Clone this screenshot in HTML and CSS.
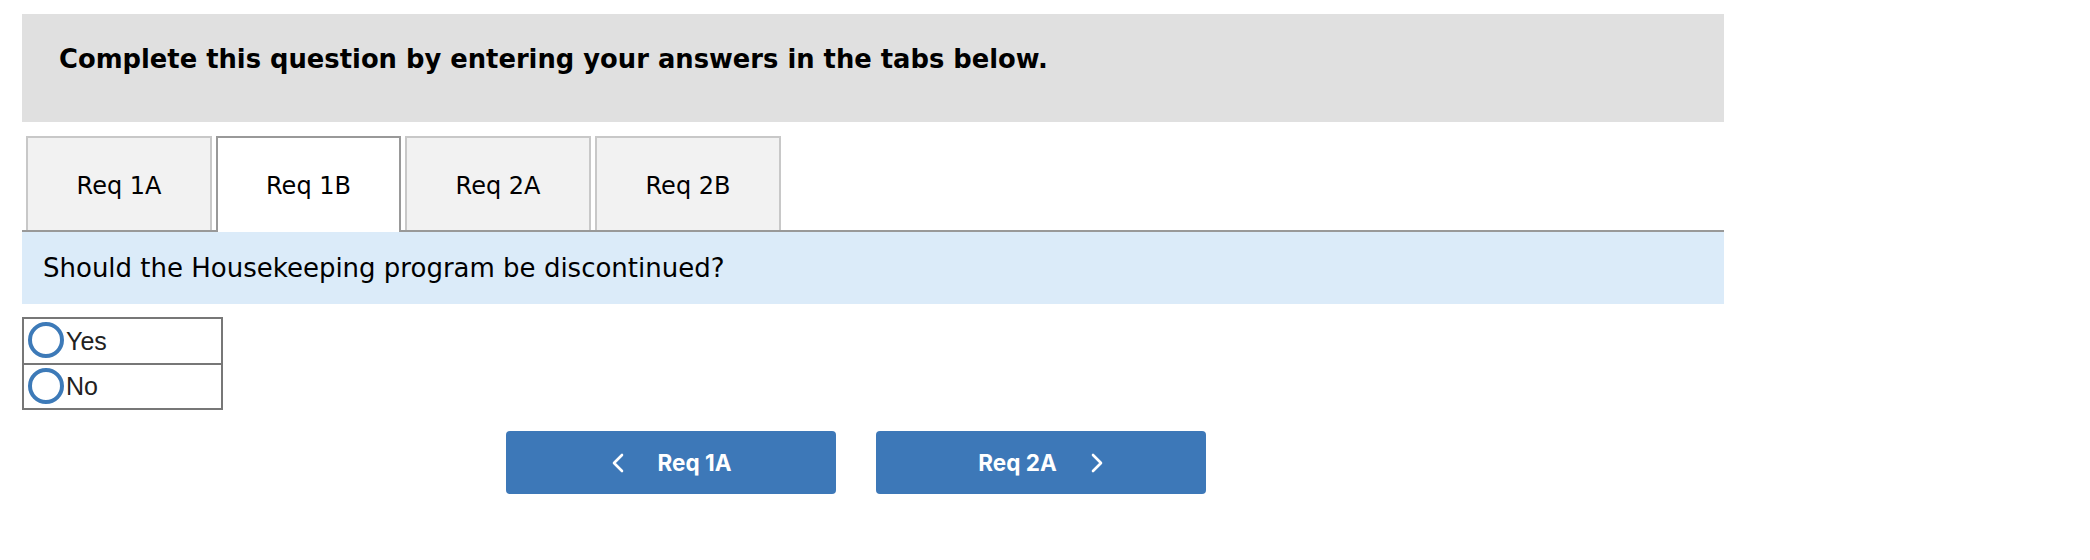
FILE: index.html
```html
<!DOCTYPE html>
<html lang="en">
<head>
<meta charset="utf-8">
<title>Complete this question</title>
<link rel="stylesheet" href="styles.css">
</head>
<body>
<div class="page">
  <div class="banner">
    <h2 class="banner-title">Complete this question by entering your answers in the tabs below.</h2>
  </div>
  <div class="tabs">
    <div class="tab">Req 1A</div>
    <div class="tab active">Req 1B</div>
    <div class="tab">Req 2A</div>
    <div class="tab">Req 2B</div>
  </div>
  <div class="prompt">Should the Housekeeping program be discontinued?</div>
  <div class="options">
    <label class="option"><span class="radio"></span><span class="opt-text">Yes</span></label>
    <label class="option"><span class="radio"></span><span class="opt-text">No</span></label>
  </div>
  <div class="nav">
    <button class="nav-btn">
      <svg class="chev" width="14" height="20" viewBox="0 0 14 20"><polyline points="11,2 3,10 11,18" fill="none" stroke="#fff" stroke-width="2.6" stroke-linecap="round" stroke-linejoin="round"/></svg>
      <span>Req 1A</span>
    </button>
    <button class="nav-btn">
      <span>Req 2A</span>
      <svg class="chev" width="14" height="20" viewBox="0 0 14 20"><polyline points="3,2 11,10 3,18" fill="none" stroke="#fff" stroke-width="2.6" stroke-linecap="round" stroke-linejoin="round"/></svg>
    </button>
  </div>
</div>
</body>
</html>
```
FILE: styles.css
```css
html, body {
  margin: 0;
  padding: 0;
  background: #fff;
}

.page {
  padding: 14px 0 0 22px;
  width: 1702px;
  font-family: "DejaVu Sans", Verdana, sans-serif;
  color: #000;
}

.banner {
  background: #e0e0e0;
  height: 108px;
  box-sizing: border-box;
  padding: 30px 0 0 37px;
}

.banner-title {
  margin: 0;
  font-size: 25.8px;
  font-weight: bold;
  line-height: 30px;
}

.tabs {
  display: flex;
  margin-top: 14px;
  border-bottom: 2px solid #999;
  height: 94px;
}

.tab {
  box-sizing: border-box;
  width: 186px;
  height: 94px;
  margin-left: 4px;
  background: #f2f2f2;
  border: 2px solid #c8c8c8;
  border-bottom: none;
  display: flex;
  align-items: center;
  justify-content: center;
  font-size: 24px;
  padding-top: 3px;
}

.tab.active {
  background: #fff;
  border-color: #999;
  height: 96px;
  width: 185px;
  position: relative;
  z-index: 1;
  padding-top: 1px;
}

.prompt {
  background: #dbebf9;
  height: 72px;
  box-sizing: border-box;
  padding-left: 21px;
  display: flex;
  align-items: center;
  font-size: 26px;
}

.options {
  margin-top: 13px;
  width: 201px;
  box-sizing: border-box;
  border: 2px solid #777;
}

.option {
  display: flex;
  align-items: center;
  height: 44px;
  padding-left: 4px;
  font-family: "Liberation Sans", Arial, sans-serif;
  font-size: 25px;
  color: #222;
}

.option + .option {
  border-top: 2px solid #777;
  height: 43px;
}

.radio {
  box-sizing: border-box;
  width: 36px;
  height: 36px;
  border: 4px solid #3d7ab8;
  border-radius: 50%;
  margin-right: 2px;
  margin-bottom: 2px;
}

.nav {
  display: flex;
  gap: 40px;
  margin-top: 21px;
  padding-left: 484px;
}

.nav-btn {
  width: 330px;
  height: 63px;
  border: none;
  border-radius: 4px;
  background: #3d78b8;
  color: #fff;
  font-family: Inter, Roboto, sans-serif;
  font-weight: bold;
  font-size: 22.5px;
  display: flex;
  align-items: center;
  justify-content: center;
  gap: 33px;
  padding: 0;
}

.chev {
  display: block;
}
```
